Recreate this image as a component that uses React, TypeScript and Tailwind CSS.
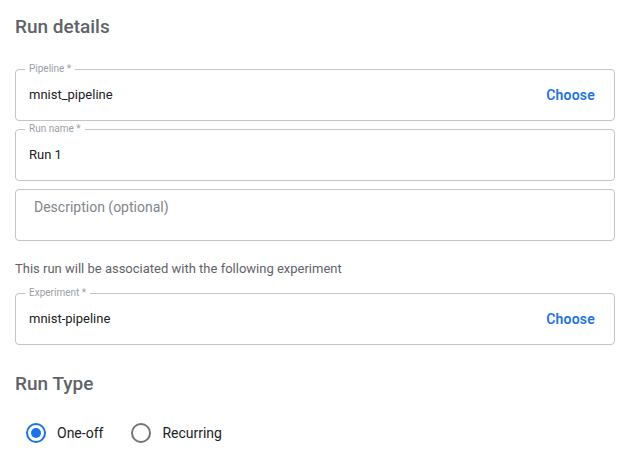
import React from 'react';

const FONT = { fontFamily: 'Roboto, "Noto Sans", Arial, sans-serif' };

function OutlinedField({ label, value, action }: { label: string; value: string; action?: string }) {
  return (
    <fieldset className="border border-[#c4c4c4] rounded-[4px] pl-[9px] pr-[19px] min-w-0">
      <legend className="px-1 text-[10px] leading-3 text-[#9aa0a6]">{label}</legend>
      <div className="flex items-center justify-between pl-1 pt-[10px] pb-[15px]">
        <span className="text-[13px] leading-5 text-[#202124]">{value}</span>
        {action && <button className="text-[14px] leading-5 font-semibold text-[#1a73e8] tracking-[0.2px]">{action}</button>}
      </div>
    </fieldset>
  );
}

function Radio({ label, checked }: { label: string; checked?: boolean }) {
  return (
    <label className="flex items-center gap-[11px]">
      <span
        className={`w-5 h-5 rounded-full border-2 flex items-center justify-center ${
          checked ? 'border-[#1a73e8]' : 'border-[#757575]'
        }`}
      >
        {checked && <span className="w-[10px] h-[10px] rounded-full bg-[#1a73e8]" />}
      </span>
      <span className="text-[14px] leading-5 text-[#202124]">{label}</span>
    </label>
  );
}

export default function App() {
  return (
    <div className="bg-white min-h-[471px] w-[636px] pt-[15px] pl-[15px] pr-[21px]" style={FONT}>
      <h2 className="text-[19px] leading-6 font-medium text-[#5f6368]">Run details</h2>

      <div className="mt-[24px]">
        <OutlinedField label="Pipeline *" value="mnist_pipeline" action="Choose" />
      </div>
      <div className="mt-[2px]">
        <OutlinedField label="Run name *" value="Run 1" />
      </div>

      <div className="mt-2 h-[52px] border border-[#c4c4c4] rounded-[4px] pl-[18px] pt-[5px]">
        <span className="text-[14px] leading-5 text-[#80868b]">Description (optional)</span>
      </div>

      <p className="mt-[19px] text-[13px] leading-[18px] text-[#5f6368]">
        This run will be associated with the following experiment
      </p>

      <div className="mt-[9px]">
        <OutlinedField label="Experiment *" value="mnist-pipeline" action="Choose" />
      </div>

      <h2 className="mt-[27px] text-[19px] leading-6 font-medium text-[#5f6368]">Run Type</h2>

      <div className="mt-[27px] pl-[11px] flex items-center gap-[28px]">
        <Radio label="One-off" checked />
        <Radio label="Recurring" />
      </div>
    </div>
  );
}
